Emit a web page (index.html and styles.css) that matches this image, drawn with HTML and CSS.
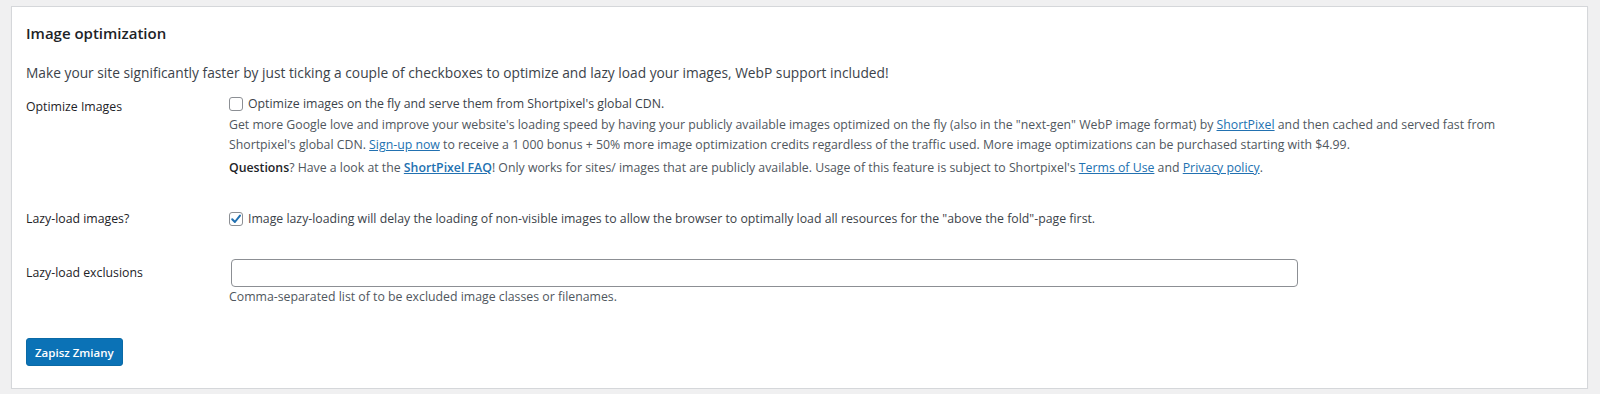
FILE: index.html
```html
<!doctype html>
<html>
	<head>
		<title>Image optimization</title>
		<link rel="stylesheet" href="styles.css">
	</head>
	<body>
		<div class="panel">
			<h2 class="panel-title">Image optimization</h2>
			<p class="intro">Make your site significantly faster by just ticking a couple of checkboxes to optimize and lazy load your images, WebP support included!</p>

			<div class="form-row">
				<div class="form-label shifted">Optimize Images</div>
				<div class="form-field">
					<label class="check-line">
						<span class="check"></span>
						Optimize images on the fly and serve them from Shortpixel's global CDN.
					</label>
					<p class="description">
						Get more Google love and improve your website's loading speed by having your publicly available images optimized on the fly (also in the "next-gen" WebP image format) by <a href="#">ShortPixel</a> and then cached and served fast from Shortpixel's global CDN. <a href="#">Sign-up now</a> to receive a 1 000 bonus + 50% more image optimization credits regardless of the traffic used. More image optimizations can be purchased starting with $4.99.
					</p>
					<p class="description questions">
						<b>Questions</b>? Have a look at the <a href="#"><b>ShortPixel FAQ</b></a>! Only works for sites/ images that are publicly available. Usage of this feature is subject to Shortpixel's <a href="#">Terms of Use</a> and <a href="#">Privacy policy</a>.
					</p>
				</div>
			</div>

			<div class="form-row lazy-row">
				<div class="form-label">Lazy-load images?</div>
				<div class="form-field">
					<label class="check-line">
						<span class="check checked">
							<svg width="12" height="12" viewBox="0 0 12 12"><path d="M2.2 6.2 L4.9 9 L10 2.6" fill="none" stroke="#2271b1" stroke-width="2" stroke-linecap="round" stroke-linejoin="round"/></svg>
						</span>
						Image lazy-loading will delay the loading of non-visible images to allow the browser to optimally load all resources for the "above the fold"-page first.
					</label>
				</div>
			</div>

			<div class="form-row exclude-row">
				<div class="form-label tall">Lazy-load exclusions</div>
				<div class="form-field">
					<input class="text-input" type="text">
					<p class="description">Comma-separated list of to be excluded image classes or filenames.</p>
				</div>
			</div>

			<div class="actions">
				<button class="button-primary">Zapisz Zmiany</button>
			</div>
		</div>
	</body>
</html>
```

FILE: styles.css
```css
body {
	margin: 0;
	padding: 6px 12px 0 11px;
	background: #f0f0f1;
	font-family: "Open Sans", Arial, sans-serif;
	font-size: 12.3px;
	color: #3c434a;
}

.panel {
	background: #fff;
	border: 1px solid #d5d7da;
	box-shadow: 0 1px 1px rgba(0, 0, 0, 0.05);
	padding: 0 14px 22px 14px;
}

.panel-title {
	margin: 16px 0 0 0;
	font-size: 15px;
	font-weight: 600;
	line-height: 20px;
	color: #1d2327;
}

.intro {
	margin: 20px 0 0 0;
	font-size: 13.75px;
	line-height: 20px;
	color: #3c434a;
}

.form-row {
	display: grid;
	grid-template-columns: 203px 1fr;
	margin-top: 11px;
}

.lazy-row {
	margin-top: 31px;
}

.exclude-row {
	margin-top: 30px;
}

.form-label {
	line-height: 20px;
	color: #1d2327;
}

.form-label.shifted {
	padding-top: 3px;
}

.form-label.tall {
	line-height: 28px;
}

.form-field {
	padding-right: 20px;
}

.check-line {
	display: flex;
	align-items: center;
	line-height: 20px;
	color: #3c434a;
}

.check {
	display: inline-flex;
	align-items: center;
	justify-content: center;
	box-sizing: border-box;
	width: 14px;
	height: 14px;
	margin-right: 5px;
	border: 1px solid #8c8f94;
	border-radius: 3px;
	background: #fff;
}

.description {
	margin: 1px 0 0 0;
	line-height: 20px;
	color: #50575e;
}

.questions {
	margin-top: 3px;
}

.description a {
	color: #2271b1;
}

.description b {
	font-weight: 600;
	color: #1d2327;
}

.description a b {
	color: #2271b1;
}

.text-input {
	display: block;
	box-sizing: border-box;
	width: 1067px;
	height: 28px;
	margin: 0 0 0 2px;
	padding: 0 8px;
	border: 1px solid #8c8f94;
	border-radius: 4px;
	background: #fff;
	font: inherit;
}

.text-input + .description {
	margin-top: 0;
}

.actions {
	margin-top: 31px;
}

.button-primary {
	height: 28px;
	padding: 0 8px;
	border: 1px solid #0a6aa6;
	border-radius: 3px;
	background: #0b72b6;
	color: #fff;
	font-family: inherit;
	font-size: 11.5px;
	font-weight: 600;
}
```
